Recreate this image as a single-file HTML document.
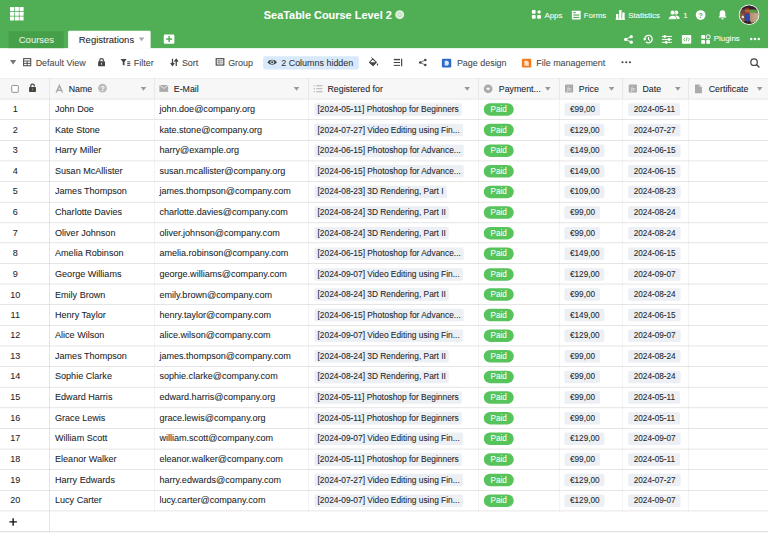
<!DOCTYPE html><html><head><meta charset="utf-8"><style>
*{box-sizing:border-box;margin:0;padding:0}
html,body{width:768px;height:533px;overflow:hidden;background:#fff}
body{font-family:"Liberation Sans",sans-serif;}
#w{position:absolute;left:0;top:0;width:1229px;height:853px;transform:scale(0.625);transform-origin:0 0;overflow:hidden;background:#fff;color:#212529}
.a,.tag,.ltag,.paid{-webkit-text-stroke:0.1px}
.a{position:absolute;white-space:nowrap}
svg.a{overflow:visible}
#top{position:absolute;left:0;top:0;width:1229px;height:76.5px;background:#50ae54}
.wt{color:#fff;font-size:12.7px;line-height:20px}
.tb{font-size:14.3px;color:#474747;line-height:20px}
.hd{position:absolute;left:0;top:125px;width:1229px;height:33px;background:#f7f7f7;border-top:1px solid #e8e8e8}
.vl{position:absolute;width:1px;background:#d6d6d6}
.hl{position:absolute;left:0;width:1229px;height:1px;background:#d6d6d6}
.ht{font-size:14.1px;color:#212529;line-height:20px}
.ct{font-size:14.5px;color:#212529;line-height:20px}
.tag{position:absolute;height:20px;background:#eceff4;border-radius:3px;font-size:13.1px;line-height:20px;padding:0 8px 0 9px;color:#212529}
.ltag{position:absolute;height:20px;background:#eceff4;border-radius:3px;font-size:13.4px;line-height:19px;padding:0 5px 0 5px;color:#212529}
.paid{position:absolute;height:20px;width:48px;background:#56c45b;border-radius:10px;font-size:13px;line-height:20px;color:#fff;text-align:center}
</style></head><body><div id="w">
<div id="top"></div>
<svg class="a" style="left:16px;top:11px" width="22" height="22" viewBox="0 0 22 22"><rect x="0.0" y="0.0" width="6.6" height="6.6" rx="0.8" fill="#fff"/><rect x="0.0" y="7.6" width="6.6" height="6.6" rx="0.8" fill="#fff"/><rect x="0.0" y="15.2" width="6.6" height="6.6" rx="0.8" fill="#fff"/><rect x="7.6" y="0.0" width="6.6" height="6.6" rx="0.8" fill="#fff"/><rect x="7.6" y="7.6" width="6.6" height="6.6" rx="0.8" fill="#fff"/><rect x="7.6" y="15.2" width="6.6" height="6.6" rx="0.8" fill="#fff"/><rect x="15.2" y="0.0" width="6.6" height="6.6" rx="0.8" fill="#fff"/><rect x="15.2" y="7.6" width="6.6" height="6.6" rx="0.8" fill="#fff"/><rect x="15.2" y="15.2" width="6.6" height="6.6" rx="0.8" fill="#fff"/></svg>
<div class="a " style="left:422px;top:14px;color:#fff;font-size:17.5px;font-weight:bold;line-height:20px">SeaTable Course Level 2</div>
<svg class="a" style="left:632px;top:16px" width="15" height="15" viewBox="0 0 15 15"><circle cx="7.5" cy="7.5" r="7.2" fill="#dff0df"/><circle cx="7.5" cy="7.5" r="3" fill="none" stroke="#a9d4a9" stroke-width="1.2"/></svg>
<div class="a" style="left:14px;top:50px;width:88px;height:26.5px;background:#46a04a"></div>
<div class="a " style="left:30px;top:52.5px;font-size:15.2px;line-height:22px;color:#e6f2e6">Courses</div>
<div class="a" style="left:109px;top:49px;width:132px;height:29px;background:#fff;border-radius:2px 2px 0 0"></div>
<div class="a " style="left:126px;top:52.5px;font-size:15.2px;line-height:22px;color:#212529">Registrations</div>
<svg class="a" style="left:222px;top:60px" width="9" height="6" viewBox="0 0 9 6"><path d="M0 0H9L4.5 6Z" fill="#aaa"/></svg>
<svg class="a" style="left:262px;top:55px" width="17" height="15" viewBox="0 0 17 15"><rect x="0" y="0" width="17" height="15" rx="2" fill="#fff"/><rect x="7.4" y="2.8" width="2.4" height="9.4" fill="#50ae54"/><rect x="3.8" y="6.3" width="9.6" height="2.4" fill="#50ae54"/></svg>
<svg class="a" style="left:851px;top:16px" width="15" height="14" viewBox="0 0 15 14"><rect x="0" y="0" width="6" height="6" rx="1.2" fill="#fff"/><rect x="0" y="8" width="6" height="6" rx="1.2" fill="#fff"/><rect x="8.5" y="8" width="6" height="6" rx="1.2" fill="#fff"/><path d="M11.5 0 L14.8 3.2 L11.5 6.4 L8.2 3.2Z" fill="#fff"/></svg>
<div class="a wt" style="left:871px;top:13.8px;">Apps</div>
<svg class="a" style="left:915px;top:17px" width="14" height="14" viewBox="0 0 14 14"><rect x="0" y="0" width="14" height="14" rx="1" fill="#fff"/><rect x="2.2" y="2.3" width="4" height="1.8" fill="#50ae54"/><rect x="2.2" y="6.1" width="9.6" height="1.9" fill="#50ae54"/><rect x="2.2" y="10" width="9.6" height="1.9" fill="#50ae54"/></svg>
<div class="a wt" style="left:934px;top:13.8px;">Forms</div>
<svg class="a" style="left:985px;top:16px" width="15" height="16" viewBox="0 0 15 16"><rect x="0.6" y="6.5" width="3.8" height="8" fill="#fff"/><rect x="5.6" y="0" width="3.8" height="14.5" fill="#fff"/><rect x="10.6" y="4" width="3.8" height="10.5" fill="#fff"/><rect x="0" y="14" width="15" height="1.8" fill="#fff"/></svg>
<div class="a wt" style="left:1005px;top:13.8px;">Statistics</div>
<svg class="a" style="left:1070px;top:16px" width="18" height="15" viewBox="0 0 18 15"><circle cx="11.8" cy="4" r="3.3" fill="#fff"/><path d="M7 14.5 C7 10 9.5 8.6 11.8 8.6 C14.5 8.6 17.5 10 17.5 14.5Z" fill="#fff"/><circle cx="6.2" cy="4.2" r="3.9" fill="#fff" stroke="#50ae54" stroke-width="1.1"/><path d="M-0.3 15 C-0.3 10.2 2.8 8.6 6.2 8.6 C9.6 8.6 12.7 10.2 12.7 15Z" fill="#fff" stroke="#50ae54" stroke-width="1.1"/></svg>
<div class="a wt" style="left:1093px;top:13.8px;">1</div>
<svg class="a" style="left:1113px;top:16px" width="16" height="16" viewBox="0 0 16 16"><circle cx="8" cy="8" r="7.8" fill="#fff"/><text x="8" y="12.3" font-size="12" font-weight="bold" text-anchor="middle" fill="#50ae54" font-family="Liberation Sans">?</text></svg>
<svg class="a" style="left:1149px;top:15px" width="14" height="17" viewBox="0 0 14 17"><path d="M7 1.2 C10.5 1.2 11.6 4 11.6 7 V10.5 L13.6 13 H0.4 L2.4 10.5 V7 C2.4 4 3.5 1.2 7 1.2Z" fill="#fff"/><path d="M5 14.2 H9 A2 2 0 0 1 5 14.2Z" fill="#fff"/></svg>
<svg class="a" style="left:1182px;top:7px" width="33" height="33" viewBox="0 0 33 33"><defs><clipPath id="av"><circle cx="16.5" cy="16.5" r="14.9"/></clipPath><linearGradient id="rt" x1="0" y1="0" x2="1" y2="0"><stop offset="0" stop-color="#b08a6e"/><stop offset="1" stop-color="#d0b090"/></linearGradient></defs><circle cx="16.5" cy="16.5" r="16.5" fill="#f4f4f4"/><g clip-path="url(#av)"><rect width="33" height="33" fill="#6a4438"/><rect x="0" y="0" width="33" height="8" fill="#2e2030"/><path d="M17 10 C24 9 30 11 33 14 V33 H17Z" fill="url(#rt)"/><path d="M17 9 C23 8 29 9 33 12 V15 C28 14 22 13 17 13Z" fill="#5a9a40"/><path d="M0 14 C4 13 7 14 9 16 V33 H0Z" fill="#8c5a44"/><circle cx="13.5" cy="9.5" r="3.8" fill="#b0663a"/><path d="M9.5 8 C10 4.5 17 4.5 17.5 8Z" fill="#8a2a20"/><rect x="10" y="13" width="7" height="3" fill="#a83428"/><path d="M10 15 H17.5 L18 27 H14.6 L13.8 23 L13 27 H9.6Z" fill="#2a48b0"/><rect x="9" y="27" width="4.5" height="3.5" fill="#24160f"/><rect x="14.5" y="27" width="4.5" height="3.5" fill="#24160f"/><circle cx="6.5" cy="20" r="2" fill="#e8e0dc"/><rect x="0" y="29" width="33" height="4" fill="#3a2a28"/></g></svg>
<svg class="a" style="left:998px;top:56px" width="15" height="14" viewBox="0 0 15 14"><circle cx="12" cy="2.6" r="2.6" fill="#fff"/><circle cx="3" cy="7" r="2.6" fill="#fff"/><circle cx="12" cy="11.4" r="2.6" fill="#fff"/><path d="M12 2.6 L3 7 L12 11.4" stroke="#fff" stroke-width="1.4" fill="none"/></svg>
<svg class="a" style="left:1028px;top:55px" width="17" height="15" viewBox="0 0 17 15"><path d="M3.6 7.5 A6 6 0 1 1 5.4 11.8" stroke="#fff" stroke-width="2" fill="none"/><path d="M0.6 6.6 H6.6 L3.6 10.2Z" fill="#fff"/><path d="M9.6 4.2 V8 L12 10" stroke="#fff" stroke-width="1.7" fill="none"/></svg>
<svg class="a" style="left:1059px;top:56px" width="16" height="14" viewBox="0 0 16 14"><rect x="0" y="1.5" width="16" height="1.6" fill="#fff"/><rect x="0" y="6.2" width="16" height="1.6" fill="#fff"/><rect x="0" y="10.9" width="16" height="1.6" fill="#fff"/><rect x="3" y="0" width="3" height="4.6" fill="#fff"/><rect x="10" y="4.7" width="3" height="4.6" fill="#fff"/><rect x="5.5" y="9.4" width="3" height="4.6" fill="#fff"/></svg>
<svg class="a" style="left:1091px;top:56px" width="15" height="14" viewBox="0 0 15 14"><rect x="0" y="0" width="15" height="14" rx="1.5" fill="#fff"/><path d="M5 4.5 L2.8 7 L5 9.5 M10 4.5 L12.2 7 L10 9.5 M8.4 3.8 L6.6 10.2" stroke="#50ae54" stroke-width="1.3" fill="none"/></svg>
<svg class="a" style="left:1122px;top:56px" width="14" height="14" viewBox="0 0 14 14"><rect x="0" y="0" width="6" height="6" rx="1" fill="#fff"/><rect x="8" y="0" width="6" height="6" rx="1.5" fill="none" stroke="#fff" stroke-width="1.6"/><rect x="0" y="8" width="6" height="6" rx="1" fill="#fff"/><rect x="8" y="8" width="6" height="6" rx="1" fill="#fff"/></svg>
<div class="a wt" style="left:1142px;top:52px;">Plugins</div>
<svg class="a" style="left:1200px;top:60px" width="16" height="5" viewBox="0 0 16 5"><circle cx="2" cy="2.5" r="2" fill="#fff"/><circle cx="8" cy="2.5" r="2" fill="#fff"/><circle cx="14" cy="2.5" r="2" fill="#fff"/></svg>
<svg class="a" style="left:16px;top:96px" width="10" height="7" viewBox="0 0 10 7"><path d="M0 0H10L5 7Z" fill="#777"/></svg>
<svg class="a" style="left:37px;top:93px" width="13" height="13" viewBox="0 0 13 13"><rect x="0.8" y="0.8" width="11.4" height="11.4" fill="none" stroke="#454545" stroke-width="1.6"/><path d="M0.8 4.6H12.2M0.8 8.4H12.2M6.5 4.6V12.2" stroke="#454545" stroke-width="1.4"/></svg>
<div class="a tb" style="left:57px;top:90.3px;">Default View</div>
<svg class="a" style="left:157px;top:92.5px" width="11" height="13" viewBox="0 0 11 13"><path d="M2.6 6 V3.6 A2.9 2.9 0 0 1 8.4 3.6 V5" stroke="#454545" stroke-width="1.9" fill="none"/><rect x="0" y="5" width="11" height="8" rx="1" fill="#454545"/><rect x="4.7" y="7.6" width="1.6" height="3" fill="#ddd"/></svg>
<svg class="a" style="left:193px;top:94px" width="16" height="12" viewBox="0 0 16 12"><path d="M0 0.3 H9.6 L6.2 5 V11 L3.4 9.4 V5Z" fill="#454545"/><path d="M10.5 5H15.5M10.5 7.8H15.5M10.5 10.6H15.5" stroke="#454545" stroke-width="1.6"/></svg>
<div class="a tb" style="left:214px;top:90.3px;">Filter</div>
<svg class="a" style="left:273px;top:94px" width="12" height="12" viewBox="0 0 12 12"><path d="M3 0V9.5M0.2 6.6L3 10.6L5.8 6.6" stroke="#454545" stroke-width="2" fill="none"/><path d="M9 11.5V1.6M6.2 4.6L9 0.8L11.8 4.6" stroke="#454545" stroke-width="2" fill="none"/></svg>
<div class="a tb" style="left:291px;top:90.3px;">Sort</div>
<svg class="a" style="left:345px;top:93px" width="14" height="12" viewBox="0 0 14 12"><rect x="0.9" y="0.9" width="12.2" height="10.2" fill="none" stroke="#454545" stroke-width="1.8"/><path d="M3 4.4H8M3 7.6H8" stroke="#454545" stroke-width="1.5"/><path d="M9 4.4H11M9 7.6H11" stroke="#454545" stroke-width="1.5"/></svg>
<div class="a tb" style="left:365px;top:90.3px;">Group</div>
<div class="a" style="left:420.5px;top:89.5px;width:153px;height:21px;background:#d8e9fb;border-radius:3px"></div>
<svg class="a" style="left:428px;top:94px" width="15" height="11" viewBox="0 0 15 11"><path d="M0 5.5 C2.6 0.2 12.4 0.2 15 5.5 C12.4 10.8 2.6 10.8 0 5.5Z" fill="#454545"/><circle cx="7.5" cy="5.5" r="3" fill="#d8e9fb"/><circle cx="7.5" cy="5.5" r="1.7" fill="#454545"/></svg>
<div class="a tb" style="left:450px;top:90.3px;color:#333">2 Columns hidden</div>
<svg class="a" style="left:590px;top:92px" width="16" height="14" viewBox="0 0 16 14"><path d="M6.5 2.2 L12.2 7.8 L6.8 13 L1.2 7.6Z" fill="none" stroke="#454545" stroke-width="1.7" stroke-linejoin="round"/><path d="M1.2 7.6 H12.2 L6.8 13Z" fill="#454545"/><path d="M6.5 2.2 L4.2 0" stroke="#454545" stroke-width="1.6"/><path d="M14 9 C15.4 10.8 15.6 12 14 13 C12.4 12 12.6 10.8 14 9Z" fill="#454545"/></svg>
<svg class="a" style="left:630px;top:94px" width="14" height="12" viewBox="0 0 14 12"><path d="M0 1.3H10" stroke="#454545" stroke-width="2.2"/><path d="M0 6H10M0 10.6H10" stroke="#454545" stroke-width="1.6"/><path d="M12.6 0V12" stroke="#454545" stroke-width="1.9"/></svg>
<svg class="a" style="left:670px;top:94px" width="13" height="12" viewBox="0 0 13 12"><circle cx="10.5" cy="2" r="2" fill="#454545"/><circle cx="2.3" cy="6" r="2" fill="#454545"/><circle cx="10.5" cy="10" r="2" fill="#454545"/><path d="M10.5 2 L2.3 6 L10.5 10" stroke="#454545" stroke-width="1.2" fill="none"/></svg>
<svg class="a" style="left:707px;top:94px" width="15" height="14" viewBox="0 0 15 14"><rect x="0" y="0" width="15" height="14" rx="2" fill="#2e6bc6"/><path d="M4.5 3.2 H8 C10.6 3.2 11.2 5.2 11.2 7 C11.2 8.8 10.6 10.8 8 10.8 H4.5Z" fill="#dce8f8"/></svg>
<div class="a tb" style="left:731px;top:90.3px;">Page design</div>
<svg class="a" style="left:835px;top:94px" width="15" height="14" viewBox="0 0 15 14"><rect x="0" y="0" width="15" height="14" rx="2" fill="#f47b20"/><path d="M4 3 H8.5 L11 5.5 V11 H4Z" fill="#fde3cc"/></svg>
<div class="a tb" style="left:858px;top:90.3px;">File management</div>
<svg class="a" style="left:994px;top:97px" width="16" height="5" viewBox="0 0 16 5"><circle cx="2" cy="2.5" r="1.7" fill="#454545"/><circle cx="8" cy="2.5" r="1.7" fill="#454545"/><circle cx="14" cy="2.5" r="1.7" fill="#454545"/></svg>
<svg class="a" style="left:1200px;top:93px" width="16" height="15" viewBox="0 0 16 15"><circle cx="6.5" cy="6.5" r="5.2" stroke="#454545" stroke-width="2" fill="none"/><path d="M10.3 10.3 L15 15" stroke="#454545" stroke-width="2.2"/></svg>
<div class="hd"></div>
<div class="hl" style="top:157.5px"></div>
<div class="vl" style="left:79px;top:125px;height:33px;background:#dedede"></div>
<div class="vl" style="left:79px;top:157.5px;height:695.5px;background:#d6d6d6"></div>
<div class="vl" style="left:247px;top:125px;height:33px;background:#dedede"></div>
<div class="vl" style="left:247px;top:157.5px;height:660.0999999999999px;background:#ececec"></div>
<div class="vl" style="left:493px;top:125px;height:33px;background:#dedede"></div>
<div class="vl" style="left:493px;top:157.5px;height:660.0999999999999px;background:#ececec"></div>
<div class="vl" style="left:765px;top:125px;height:33px;background:#dedede"></div>
<div class="vl" style="left:765px;top:157.5px;height:660.0999999999999px;background:#ececec"></div>
<div class="vl" style="left:895px;top:125px;height:33px;background:#dedede"></div>
<div class="vl" style="left:895px;top:157.5px;height:660.0999999999999px;background:#ececec"></div>
<div class="vl" style="left:996px;top:125px;height:33px;background:#dedede"></div>
<div class="vl" style="left:996px;top:157.5px;height:660.0999999999999px;background:#ececec"></div>
<div class="vl" style="left:1101px;top:125px;height:33px;background:#dedede"></div>
<div class="vl" style="left:1101px;top:157.5px;height:660.0999999999999px;background:#ececec"></div>
<svg class="a" style="left:18px;top:136px" width="12" height="12.5" viewBox="0 0 12 12.5"><rect x="0.75" y="0.75" width="10.5" height="11" rx="1" fill="#fff" stroke="#8a8a8a" stroke-width="1.5"/></svg>
<svg class="a" style="left:46px;top:134px" width="12" height="13" viewBox="0 0 12 13"><path d="M3.2 6 V3.6 A2.9 2.9 0 0 1 9 3.6 V4.2" stroke="#444" stroke-width="1.9" fill="none"/><rect x="0.5" y="5" width="11" height="8" rx="1" fill="#444"/><rect x="5.2" y="7.5" width="1.6" height="3" fill="#8a8a6a"/></svg>
<svg class="a" style="left:89px;top:136px" width="12" height="12" viewBox="0 0 12 12"><path d="M0.9 12 L6 0.9 L11.1 12 M2.8 8.2 H9.2" stroke="#aaa" stroke-width="2.4" fill="none"/></svg>
<div class="a ht" style="left:110px;top:131.5px;">Name</div>
<svg class="a" style="left:157px;top:134px" width="14" height="14" viewBox="0 0 14 14"><circle cx="7" cy="7" r="7" fill="#bbb"/><text x="7" y="11" font-size="11" font-weight="bold" text-anchor="middle" fill="#fff" font-family="Liberation Sans">?</text></svg>
<svg class="a" style="left:255px;top:136px" width="14" height="11" viewBox="0 0 14 11"><rect x="0" y="0" width="14" height="11" fill="#aaa"/><path d="M0 0 L7 5.5 L14 0" stroke="#f7f7f7" stroke-width="1.3" fill="none"/></svg>
<div class="a ht" style="left:278px;top:131.5px;">E-Mail</div>
<svg class="a" style="left:502px;top:136px" width="14" height="12" viewBox="0 0 14 12"><path d="M4 1.2H14M4 6H14M4 10.8H14" stroke="#aaa" stroke-width="1.5"/><path d="M0 1.2H2M0 6H2M0 10.8H2" stroke="#aaa" stroke-width="1.5"/></svg>
<div class="a ht" style="left:524px;top:131.5px;">Registered for</div>
<svg class="a" style="left:774px;top:135px" width="14" height="14" viewBox="0 0 14 14"><circle cx="7" cy="7" r="7" fill="#aaa"/><path d="M3.3 5.2 H10.7 L7 10Z" fill="#f7f7f7"/></svg>
<div class="a ht" style="left:798px;top:131.5px;">Payment...</div>
<svg class="a" style="left:904px;top:135px" width="13" height="13" viewBox="0 0 13 13"><rect x="0" y="0" width="13" height="13" rx="1" fill="#aaa"/><text x="6.5" y="10" font-size="9" font-style="italic" text-anchor="middle" fill="#f7f7f7" font-family="Liberation Serif">fx</text></svg>
<svg class="a" style="left:1006px;top:135px" width="13" height="13" viewBox="0 0 13 13"><rect x="0" y="0" width="13" height="13" rx="1" fill="#aaa"/><text x="6.5" y="10" font-size="9" font-style="italic" text-anchor="middle" fill="#f7f7f7" font-family="Liberation Serif">fx</text></svg>
<div class="a ht" style="left:926px;top:131.5px;">Price</div>
<div class="a ht" style="left:1028px;top:131.5px;">Date</div>
<svg class="a" style="left:1112px;top:135px" width="11" height="14" viewBox="0 0 11 14"><path d="M0 0 H7 L11 4 V14 H0Z" fill="#aaa"/><path d="M7 0 V4 H11" fill="#ddd"/></svg>
<div class="a ht" style="left:1134px;top:131.5px;">Certificate</div>
<svg class="a" style="left:225px;top:138.5px" width="9" height="6" viewBox="0 0 9 6"><path d="M0 0H9L4.5 6Z" fill="#999"/></svg>
<svg class="a" style="left:470px;top:138.5px" width="9" height="6" viewBox="0 0 9 6"><path d="M0 0H9L4.5 6Z" fill="#999"/></svg>
<svg class="a" style="left:743px;top:138.5px" width="9" height="6" viewBox="0 0 9 6"><path d="M0 0H9L4.5 6Z" fill="#999"/></svg>
<svg class="a" style="left:872px;top:138.5px" width="9" height="6" viewBox="0 0 9 6"><path d="M0 0H9L4.5 6Z" fill="#999"/></svg>
<svg class="a" style="left:974px;top:138.5px" width="9" height="6" viewBox="0 0 9 6"><path d="M0 0H9L4.5 6Z" fill="#999"/></svg>
<svg class="a" style="left:1080px;top:138.5px" width="9" height="6" viewBox="0 0 9 6"><path d="M0 0H9L4.5 6Z" fill="#999"/></svg>
<svg class="a" style="left:1211px;top:138.5px" width="9" height="6" viewBox="0 0 9 6"><path d="M0 0H9L4.5 6Z" fill="#999"/></svg>
<div class="hl" style="top:190.8px"></div>
<div class="a ct" style="left:0;width:49px;text-align:center;top:164.10000000000002px">1</div>
<div class="a ct" style="left:88px;top:164.10000000000002px">John Doe</div>
<div class="a ct" style="left:255px;top:164.10000000000002px">john.doe@company.org</div>
<div class="ltag" style="left:503px;top:165.0px">[2024-05-11] Photoshop for Beginners</div>
<div class="paid" style="left:774px;top:165.0px">Paid</div>
<div class="tag" style="left:903px;top:165.0px">€99,00</div>
<div class="tag" style="left:1005px;top:165.0px">2024-05-11</div>
<div class="hl" style="top:223.74px"></div>
<div class="a ct" style="left:0;width:49px;text-align:center;top:197.04000000000002px">2</div>
<div class="a ct" style="left:88px;top:197.04000000000002px">Kate Stone</div>
<div class="a ct" style="left:255px;top:197.04000000000002px">kate.stone@company.org</div>
<div class="ltag" style="left:503px;top:197.94px">[2024-07-27] Video Editing using Fin...</div>
<div class="paid" style="left:774px;top:197.94px">Paid</div>
<div class="tag" style="left:903px;top:197.94px">€129,00</div>
<div class="tag" style="left:1005px;top:197.94px">2024-07-27</div>
<div class="hl" style="top:256.68px"></div>
<div class="a ct" style="left:0;width:49px;text-align:center;top:229.98000000000002px">3</div>
<div class="a ct" style="left:88px;top:229.98000000000002px">Harry Miller</div>
<div class="a ct" style="left:255px;top:229.98000000000002px">harry@example.org</div>
<div class="ltag" style="left:503px;top:230.88px">[2024-06-15] Photoshop for Advance...</div>
<div class="paid" style="left:774px;top:230.88px">Paid</div>
<div class="tag" style="left:903px;top:230.88px">€149,00</div>
<div class="tag" style="left:1005px;top:230.88px">2024-06-15</div>
<div class="hl" style="top:289.62px"></div>
<div class="a ct" style="left:0;width:49px;text-align:center;top:262.92px">4</div>
<div class="a ct" style="left:88px;top:262.92px">Susan McAllister</div>
<div class="a ct" style="left:255px;top:262.92px">susan.mcallister@company.org</div>
<div class="ltag" style="left:503px;top:263.82px">[2024-06-15] Photoshop for Advance...</div>
<div class="paid" style="left:774px;top:263.82px">Paid</div>
<div class="tag" style="left:903px;top:263.82px">€149,00</div>
<div class="tag" style="left:1005px;top:263.82px">2024-06-15</div>
<div class="hl" style="top:322.56px"></div>
<div class="a ct" style="left:0;width:49px;text-align:center;top:295.86px">5</div>
<div class="a ct" style="left:88px;top:295.86px">James Thompson</div>
<div class="a ct" style="left:255px;top:295.86px">james.thompson@company.com</div>
<div class="ltag" style="left:503px;top:296.76px">[2024-08-23] 3D Rendering, Part I</div>
<div class="paid" style="left:774px;top:296.76px">Paid</div>
<div class="tag" style="left:903px;top:296.76px">€109,00</div>
<div class="tag" style="left:1005px;top:296.76px">2024-08-23</div>
<div class="hl" style="top:355.5px"></div>
<div class="a ct" style="left:0;width:49px;text-align:center;top:328.8px">6</div>
<div class="a ct" style="left:88px;top:328.8px">Charlotte Davies</div>
<div class="a ct" style="left:255px;top:328.8px">charlotte.davies@company.com</div>
<div class="ltag" style="left:503px;top:329.7px">[2024-08-24] 3D Rendering, Part II</div>
<div class="paid" style="left:774px;top:329.7px">Paid</div>
<div class="tag" style="left:903px;top:329.7px">€99,00</div>
<div class="tag" style="left:1005px;top:329.7px">2024-08-24</div>
<div class="hl" style="top:388.44px"></div>
<div class="a ct" style="left:0;width:49px;text-align:center;top:361.74px">7</div>
<div class="a ct" style="left:88px;top:361.74px">Oliver Johnson</div>
<div class="a ct" style="left:255px;top:361.74px">oliver.johnson@company.com</div>
<div class="ltag" style="left:503px;top:362.64px">[2024-08-24] 3D Rendering, Part II</div>
<div class="paid" style="left:774px;top:362.64px">Paid</div>
<div class="tag" style="left:903px;top:362.64px">€99,00</div>
<div class="tag" style="left:1005px;top:362.64px">2024-08-24</div>
<div class="hl" style="top:421.38px"></div>
<div class="a ct" style="left:0;width:49px;text-align:center;top:394.68px">8</div>
<div class="a ct" style="left:88px;top:394.68px">Amelia Robinson</div>
<div class="a ct" style="left:255px;top:394.68px">amelia.robinson@company.com</div>
<div class="ltag" style="left:503px;top:395.58px">[2024-06-15] Photoshop for Advance...</div>
<div class="paid" style="left:774px;top:395.58px">Paid</div>
<div class="tag" style="left:903px;top:395.58px">€149,00</div>
<div class="tag" style="left:1005px;top:395.58px">2024-06-15</div>
<div class="hl" style="top:454.32px"></div>
<div class="a ct" style="left:0;width:49px;text-align:center;top:427.62px">9</div>
<div class="a ct" style="left:88px;top:427.62px">George Williams</div>
<div class="a ct" style="left:255px;top:427.62px">george.williams@company.com</div>
<div class="ltag" style="left:503px;top:428.52px">[2024-09-07] Video Editing using Fin...</div>
<div class="paid" style="left:774px;top:428.52px">Paid</div>
<div class="tag" style="left:903px;top:428.52px">€129,00</div>
<div class="tag" style="left:1005px;top:428.52px">2024-09-07</div>
<div class="hl" style="top:487.26px"></div>
<div class="a ct" style="left:0;width:49px;text-align:center;top:460.56px">10</div>
<div class="a ct" style="left:88px;top:460.56px">Emily Brown</div>
<div class="a ct" style="left:255px;top:460.56px">emily.brown@company.com</div>
<div class="ltag" style="left:503px;top:461.46px">[2024-08-24] 3D Rendering, Part II</div>
<div class="paid" style="left:774px;top:461.46px">Paid</div>
<div class="tag" style="left:903px;top:461.46px">€99,00</div>
<div class="tag" style="left:1005px;top:461.46px">2024-08-24</div>
<div class="hl" style="top:520.2px"></div>
<div class="a ct" style="left:0;width:49px;text-align:center;top:493.5px">11</div>
<div class="a ct" style="left:88px;top:493.5px">Henry Taylor</div>
<div class="a ct" style="left:255px;top:493.5px">henry.taylor@company.com</div>
<div class="ltag" style="left:503px;top:494.4px">[2024-06-15] Photoshop for Advance...</div>
<div class="paid" style="left:774px;top:494.4px">Paid</div>
<div class="tag" style="left:903px;top:494.4px">€149,00</div>
<div class="tag" style="left:1005px;top:494.4px">2024-06-15</div>
<div class="hl" style="top:553.14px"></div>
<div class="a ct" style="left:0;width:49px;text-align:center;top:526.4399999999999px">12</div>
<div class="a ct" style="left:88px;top:526.4399999999999px">Alice Wilson</div>
<div class="a ct" style="left:255px;top:526.4399999999999px">alice.wilson@company.com</div>
<div class="ltag" style="left:503px;top:527.34px">[2024-09-07] Video Editing using Fin...</div>
<div class="paid" style="left:774px;top:527.34px">Paid</div>
<div class="tag" style="left:903px;top:527.34px">€129,00</div>
<div class="tag" style="left:1005px;top:527.34px">2024-09-07</div>
<div class="hl" style="top:586.0799999999999px"></div>
<div class="a ct" style="left:0;width:49px;text-align:center;top:559.3799999999999px">13</div>
<div class="a ct" style="left:88px;top:559.3799999999999px">James Thompson</div>
<div class="a ct" style="left:255px;top:559.3799999999999px">james.thompson@company.com</div>
<div class="ltag" style="left:503px;top:560.28px">[2024-08-24] 3D Rendering, Part II</div>
<div class="paid" style="left:774px;top:560.28px">Paid</div>
<div class="tag" style="left:903px;top:560.28px">€99,00</div>
<div class="tag" style="left:1005px;top:560.28px">2024-08-24</div>
<div class="hl" style="top:619.02px"></div>
<div class="a ct" style="left:0;width:49px;text-align:center;top:592.3199999999999px">14</div>
<div class="a ct" style="left:88px;top:592.3199999999999px">Sophie Clarke</div>
<div class="a ct" style="left:255px;top:592.3199999999999px">sophie.clarke@company.com</div>
<div class="ltag" style="left:503px;top:593.22px">[2024-08-24] 3D Rendering, Part II</div>
<div class="paid" style="left:774px;top:593.22px">Paid</div>
<div class="tag" style="left:903px;top:593.22px">€99,00</div>
<div class="tag" style="left:1005px;top:593.22px">2024-08-24</div>
<div class="hl" style="top:651.96px"></div>
<div class="a ct" style="left:0;width:49px;text-align:center;top:625.26px">15</div>
<div class="a ct" style="left:88px;top:625.26px">Edward Harris</div>
<div class="a ct" style="left:255px;top:625.26px">edward.harris@company.org</div>
<div class="ltag" style="left:503px;top:626.1600000000001px">[2024-05-11] Photoshop for Beginners</div>
<div class="paid" style="left:774px;top:626.1600000000001px">Paid</div>
<div class="tag" style="left:903px;top:626.1600000000001px">€99,00</div>
<div class="tag" style="left:1005px;top:626.1600000000001px">2024-05-11</div>
<div class="hl" style="top:684.9px"></div>
<div class="a ct" style="left:0;width:49px;text-align:center;top:658.1999999999999px">16</div>
<div class="a ct" style="left:88px;top:658.1999999999999px">Grace Lewis</div>
<div class="a ct" style="left:255px;top:658.1999999999999px">grace.lewis@company.org</div>
<div class="ltag" style="left:503px;top:659.1px">[2024-05-11] Photoshop for Beginners</div>
<div class="paid" style="left:774px;top:659.1px">Paid</div>
<div class="tag" style="left:903px;top:659.1px">€99,00</div>
<div class="tag" style="left:1005px;top:659.1px">2024-05-11</div>
<div class="hl" style="top:717.8399999999999px"></div>
<div class="a ct" style="left:0;width:49px;text-align:center;top:691.1399999999999px">17</div>
<div class="a ct" style="left:88px;top:691.1399999999999px">William Scott</div>
<div class="a ct" style="left:255px;top:691.1399999999999px">william.scott@company.com</div>
<div class="ltag" style="left:503px;top:692.04px">[2024-09-07] Video Editing using Fin...</div>
<div class="paid" style="left:774px;top:692.04px">Paid</div>
<div class="tag" style="left:903px;top:692.04px">€129,00</div>
<div class="tag" style="left:1005px;top:692.04px">2024-09-07</div>
<div class="hl" style="top:750.78px"></div>
<div class="a ct" style="left:0;width:49px;text-align:center;top:724.0799999999999px">18</div>
<div class="a ct" style="left:88px;top:724.0799999999999px">Eleanor Walker</div>
<div class="a ct" style="left:255px;top:724.0799999999999px">eleanor.walker@company.com</div>
<div class="ltag" style="left:503px;top:724.98px">[2024-05-11] Photoshop for Beginners</div>
<div class="paid" style="left:774px;top:724.98px">Paid</div>
<div class="tag" style="left:903px;top:724.98px">€99,00</div>
<div class="tag" style="left:1005px;top:724.98px">2024-05-11</div>
<div class="hl" style="top:783.72px"></div>
<div class="a ct" style="left:0;width:49px;text-align:center;top:757.02px">19</div>
<div class="a ct" style="left:88px;top:757.02px">Harry Edwards</div>
<div class="a ct" style="left:255px;top:757.02px">harry.edwards@company.com</div>
<div class="ltag" style="left:503px;top:757.9200000000001px">[2024-07-27] Video Editing using Fin...</div>
<div class="paid" style="left:774px;top:757.9200000000001px">Paid</div>
<div class="tag" style="left:903px;top:757.9200000000001px">€129,00</div>
<div class="tag" style="left:1005px;top:757.9200000000001px">2024-07-27</div>
<div class="hl" style="top:816.6599999999999px"></div>
<div class="a ct" style="left:0;width:49px;text-align:center;top:789.9599999999998px">20</div>
<div class="a ct" style="left:88px;top:789.9599999999998px">Lucy Carter</div>
<div class="a ct" style="left:255px;top:789.9599999999998px">lucy.carter@company.com</div>
<div class="ltag" style="left:503px;top:790.8599999999999px">[2024-09-07] Video Editing using Fin...</div>
<div class="paid" style="left:774px;top:790.8599999999999px">Paid</div>
<div class="tag" style="left:903px;top:790.8599999999999px">€129,00</div>
<div class="tag" style="left:1005px;top:790.8599999999999px">2024-09-07</div>
<div class="hl" style="top:849.5999999999999px;height:1.6px;background:#d0d0d0"></div>
<div class="a" style="left:0;top:851.1999999999999px;width:1229px;height:20px;background:#f6f6f6"></div>
<svg class="a" style="left:15px;top:828.5px" width="12" height="12" viewBox="0 0 12 12"><path d="M6 0V12M0 6H12" stroke="#111" stroke-width="2.2"/></svg>
</div></body></html>
